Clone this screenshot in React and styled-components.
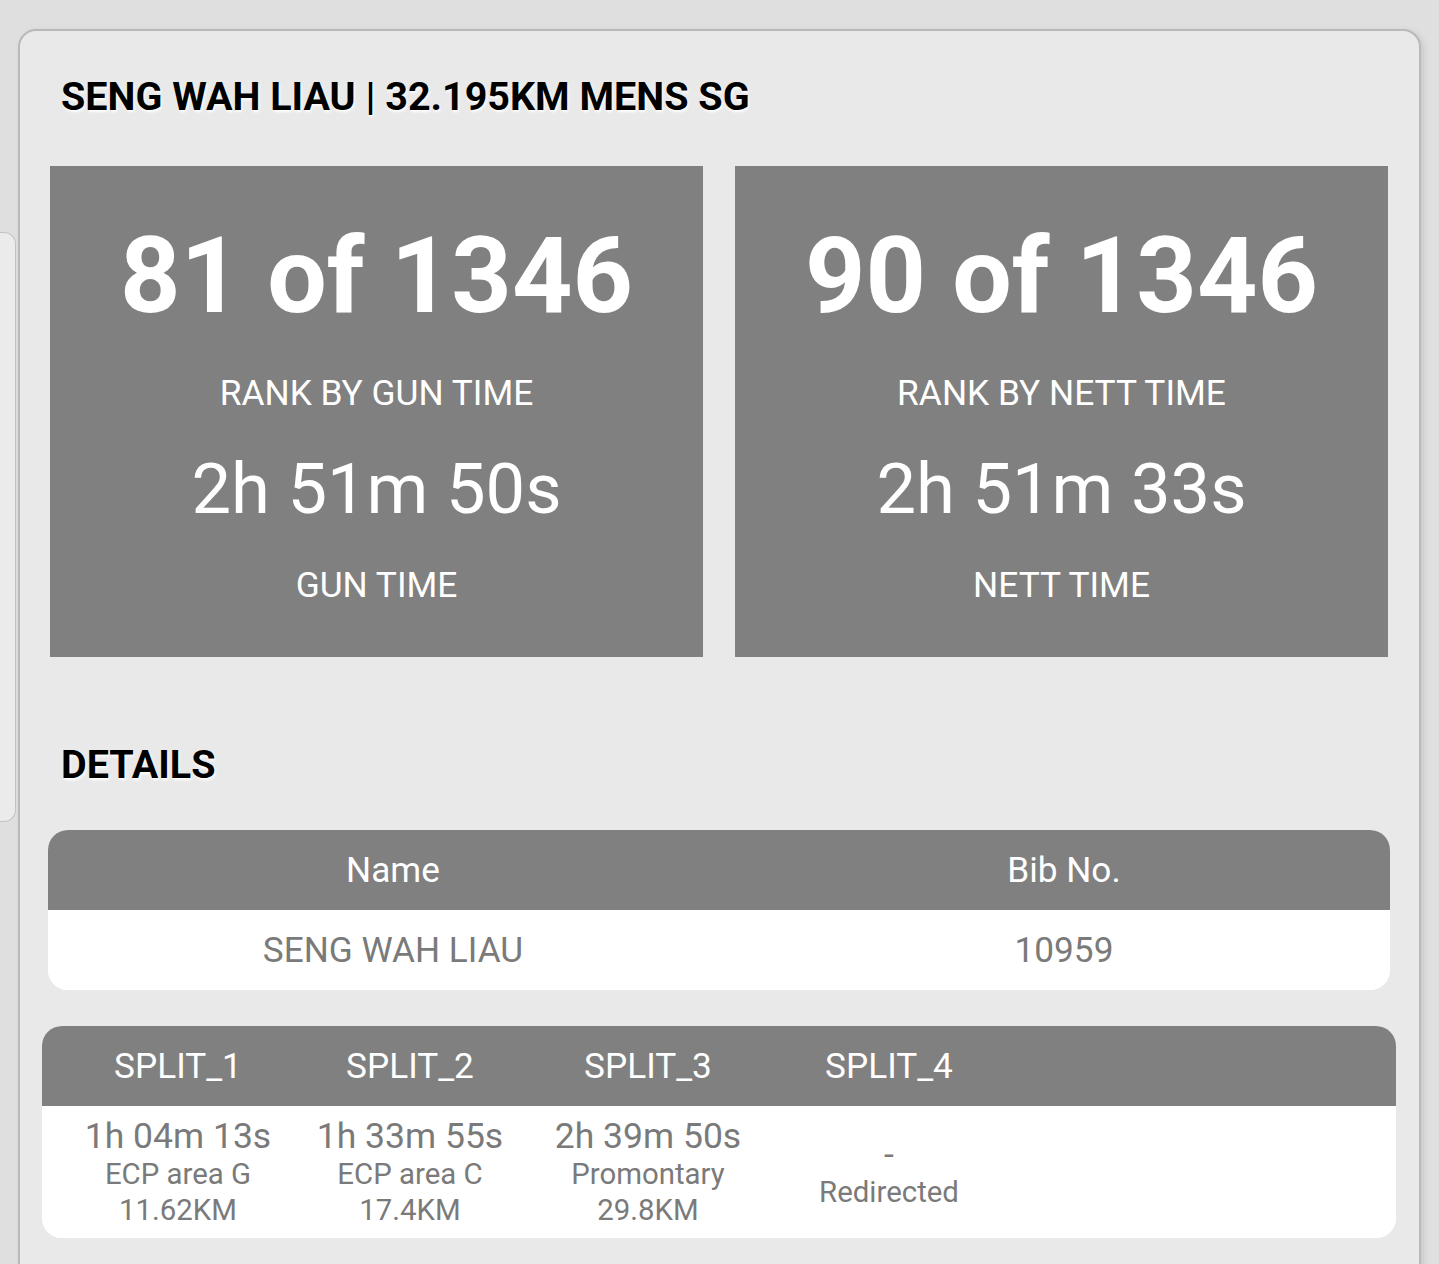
import React from "react";
import styled, { createGlobalStyle } from "styled-components";

const GlobalStyle = createGlobalStyle`
  html, body {
    margin: 0;
    padding: 0;
    background: #e0dfe0;
    font-family: Roboto, "Noto Sans", "Liberation Sans", sans-serif;
    overflow: hidden;
  }
`;

const Page = styled.div`
  display: flex;
  align-items: flex-start;
  width: 1439px;
  height: 1264px;
  overflow: hidden;
`;

const PeekCard = styled.div`
  flex: 0 0 16px;
  margin-top: 232px;
  height: 590px;
  background: #ebebeb;
  border: 1.5px solid #c2c2c2;
  border-left: none;
  border-radius: 0 12px 12px 0;
  box-sizing: border-box;
`;

const Card = styled.div`
  flex: 0 0 1403px;
  margin: 29px 0 0 2px;
  box-sizing: border-box;
  background: #e9e9e9;
  border: 2px solid #b9b9b9;
  border-radius: 18px;
  box-shadow: 3px 2px 6px rgba(0, 0, 0, 0.1);
  padding: 43px 31px 60px 30px;
`;

const Heading = styled.h2`
  margin: 0 0 0 11px;
  font-size: 39.5px;
  line-height: 45px;
  font-weight: 700;
  color: #000;
  text-shadow: 1px 2px 3px #fff;
`;

const StatGrid = styled.div`
  display: grid;
  grid-template-columns: 1fr 1fr;
  gap: 32px;
  margin-top: 47px;
`;

const StatBox = styled.div`
  background: #808080;
  color: #fff;
  display: flex;
  flex-direction: column;
  align-items: center;
  gap: 34px;
  padding: 48px 0 52px;
  text-align: center;
`;

const Rank = styled.div`
  font-size: 105.5px;
  line-height: 125px;
  font-weight: 700;
`;

const Label = styled.div`
  font-size: 35.3px;
  line-height: 40px;
`;

const Time = styled.div`
  font-size: 70.5px;
  line-height: 84px;
`;

const SectionTitle = styled(Heading)`
  margin-top: 85px;
`;

const Table = styled.div`
  margin: ${(p) => p.$mt}px -${(p) => p.$bleed}px 0;
  border-radius: 20px;
  overflow: hidden;
  background: #fff;
`;

const Row = styled.div`
  display: grid;
  grid-template-columns: ${(p) => p.$cols};
  padding-left: ${(p) => p.$pl || 0}px;
  align-items: center;
  background: ${(p) => (p.$head ? "#808080" : "#fff")};
  color: ${(p) => (p.$head ? "#fff" : "#7a7a7a")};
  min-height: 80px;
  font-size: 35.2px;
  line-height: 40px;
`;

const Cell = styled.div`
  text-align: center;
  padding: ${(p) => p.$pad || 0}px 0;
`;

const SplitTime = styled.div`
  font-size: 35.5px;
  line-height: 40px;
`;

const SplitInfo = styled.div`
  font-size: 29.4px;
  line-height: 36px;
`;

const stats = [
  { rank: "81 of 1346", rankLabel: "RANK BY GUN TIME", time: "2h 51m 50s", timeLabel: "GUN TIME" },
  { rank: "90 of 1346", rankLabel: "RANK BY NETT TIME", time: "2h 51m 33s", timeLabel: "NETT TIME" },
];

const splits = [
  { name: "SPLIT_1", time: "1h 04m 13s", place: "ECP area G", dist: "11.62KM" },
  { name: "SPLIT_2", time: "1h 33m 55s", place: "ECP area C", dist: "17.4KM" },
  { name: "SPLIT_3", time: "2h 39m 50s", place: "Promontary", dist: "29.8KM" },
  { name: "SPLIT_4", time: "-", place: "Redirected", dist: null },
];

const detailCols = "690px 1fr";
const splitCols = "232px 232px 244px 238px 1fr";

export default function App() {
  return (
    <>
      <GlobalStyle />
      <Page>
        <PeekCard />
        <Card>
          <Heading>SENG WAH LIAU | 32.195KM MENS SG</Heading>

          <StatGrid>
            {stats.map((s) => (
              <StatBox key={s.rankLabel}>
                <Rank>{s.rank}</Rank>
                <Label>{s.rankLabel}</Label>
                <Time>{s.time}</Time>
                <Label>{s.timeLabel}</Label>
              </StatBox>
            ))}
          </StatGrid>

          <SectionTitle>DETAILS</SectionTitle>

          <Table $mt={43} $bleed={2}>
            <Row $head $cols={detailCols}>
              <Cell>Name</Cell>
              <Cell>Bib No.</Cell>
            </Row>
            <Row $cols={detailCols}>
              <Cell>SENG WAH LIAU</Cell>
              <Cell>10959</Cell>
            </Row>
          </Table>

          <Table $mt={36} $bleed={8}>
            <Row $head $cols={splitCols} $pl={20}>
              {splits.map((s) => (
                <Cell key={s.name}>{s.name}</Cell>
              ))}
              <Cell />
            </Row>
            <Row $cols={splitCols} $pl={20}>
              {splits.map((s) => (
                <Cell key={s.name} $pad={10}>
                  <SplitTime>{s.time}</SplitTime>
                  <SplitInfo>{s.place}</SplitInfo>
                  {s.dist && <SplitInfo>{s.dist}</SplitInfo>}
                </Cell>
              ))}
              <Cell />
            </Row>
          </Table>
        </Card>
      </Page>
    </>
  );
}
